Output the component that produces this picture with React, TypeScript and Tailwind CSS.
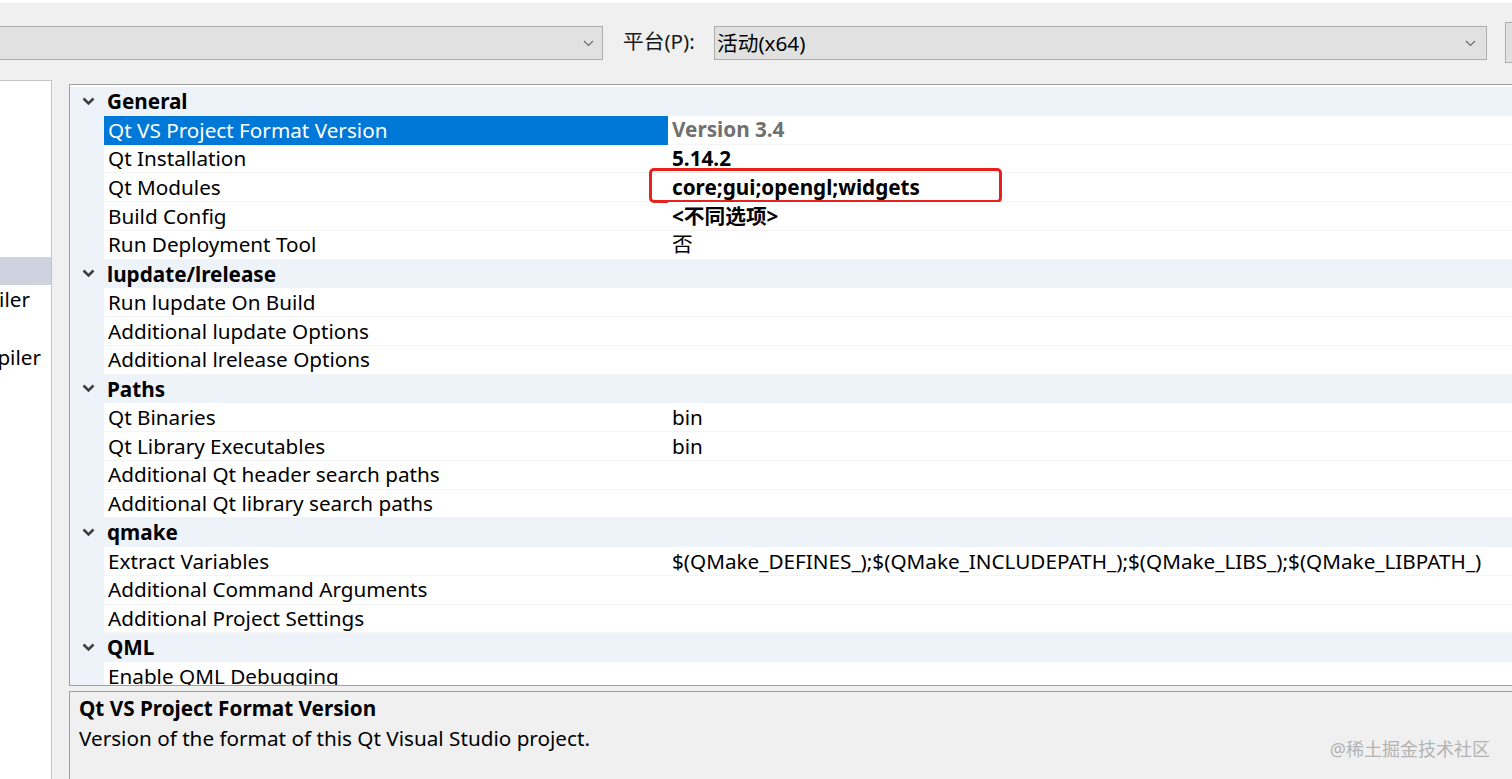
import React from "react";

type Row =
  | { kind: "cat"; label: string }
  | { kind: "prop"; label: string; value?: string; bold?: boolean; selected?: boolean; mark?: boolean };

const rows: Row[] = [
  { kind: "cat", label: "General" },
  { kind: "prop", label: "Qt VS Project Format Version", value: "Version 3.4", bold: true, selected: true },
  { kind: "prop", label: "Qt Installation", value: "5.14.2", bold: true },
  { kind: "prop", label: "Qt Modules", value: "core;gui;opengl;widgets", bold: true, mark: true },
  { kind: "prop", label: "Build Config", value: "<不同选项>", bold: true },
  { kind: "prop", label: "Run Deployment Tool", value: "否" },
  { kind: "cat", label: "lupdate/lrelease" },
  { kind: "prop", label: "Run lupdate On Build" },
  { kind: "prop", label: "Additional lupdate Options" },
  { kind: "prop", label: "Additional lrelease Options" },
  { kind: "cat", label: "Paths" },
  { kind: "prop", label: "Qt Binaries", value: "bin" },
  { kind: "prop", label: "Qt Library Executables", value: "bin" },
  { kind: "prop", label: "Additional Qt header search paths" },
  { kind: "prop", label: "Additional Qt library search paths" },
  { kind: "cat", label: "qmake" },
  {
    kind: "prop",
    label: "Extract Variables",
    value: "$(QMake_DEFINES_);$(QMake_INCLUDEPATH_);$(QMake_LIBS_);$(QMake_LIBPATH_)",
  },
  { kind: "prop", label: "Additional Command Arguments" },
  { kind: "prop", label: "Additional Project Settings" },
  { kind: "cat", label: "QML" },
  { kind: "prop", label: "Enable QML Debugging" },
];

function ComboChevron() {
  return (
    <svg width="11" height="7" viewBox="0 0 11 7" className="shrink-0">
      <path d="M1 1 L5.5 5.5 L10 1" fill="none" stroke="#6b6b6b" strokeWidth="1.2" />
    </svg>
  );
}

function CatChevron() {
  return (
    <svg width="13" height="9" viewBox="0 0 13 9">
      <path d="M1.5 1.5 L6.5 6.5 L11.5 1.5" fill="none" stroke="#404040" strokeWidth="2.6" />
    </svg>
  );
}

function GridRow({ row }: { row: Row }) {
  if (row.kind === "cat") {
    return (
      <div className="flex h-[28.75px] shrink-0 items-center bg-[#eef2f9]">
        <div className="flex w-[34px] shrink-0 items-center justify-center pl-[2px]">
          <CatChevron />
        </div>
        <span className="pl-[3px] font-bold text-black">{row.label}</span>
      </div>
    );
  }
  return (
    <div className="flex h-[28.75px] shrink-0">
      <div className="w-[34px] shrink-0 bg-[#eef2f9]" />
      <div
        className={
          row.selected
            ? "flex w-[564px] shrink-0 items-center bg-[#0078d7] pl-[4px] text-white"
            : "flex w-[564px] shrink-0 items-center border-b border-[#f4f4f4] bg-white pl-[4px] text-black"
        }
      >
        {row.label}
      </div>
      <div className="relative flex flex-1 items-center whitespace-nowrap border-b border-[#f4f4f4] bg-white pl-[4px]">
        <span
          className={
            row.selected
              ? "font-bold text-[#707070]"
              : row.bold
              ? "font-bold text-black"
              : "text-black"
          }
        >
          {row.value}
        </span>
        {row.mark && (
          <div className="absolute left-[-19px] top-[-5px] h-[35px] w-[353px] rounded-[5px] border-[3px] border-[#e8221b]" />
        )}
      </div>
    </div>
  );
}

export default function App() {
  return (
    <div
      className="relative h-[779px] w-[1512px] overflow-hidden bg-[#f0f0f0] text-[20.7px] leading-none"
      style={{ fontFamily: '"Noto Sans", "Noto Sans CJK SC", sans-serif' }}
    >
      <div className="h-[3px] bg-white" />

      {/* configuration / platform bar */}
      <div className="flex h-[79px] items-start pt-[23px]">
        <div className="flex h-[34px] w-[603px] shrink-0 items-center justify-end border border-l-0 border-[#adadad] bg-[#e1e1e1] pr-[8px]">
          <ComboChevron />
        </div>
        <span className="ml-[20px] mt-[5px] w-[91px] shrink-0 text-[#1a1a1a]">平台(P):</span>
        <div className="flex h-[34px] w-[773px] shrink-0 items-center justify-between border border-[#adadad] bg-[#e1e1e1] pl-[2px] pr-[10px]">
          <span className="text-black">活动(x64)</span>
          <ComboChevron />
        </div>
        <div className="ml-[18px] mt-[-4px] h-[41px] w-[20px] shrink-0 border border-r-0 border-[#adadad] bg-[#e1e1e1]" />
      </div>

      <div className="flex h-[697px]">
        {/* category tree, scrolled */}
        <div className="mt-[-2px] flex h-[699px] w-[52px] shrink-0 flex-col overflow-hidden border-r border-t border-[#c4c4c4] bg-white">
          <div className="h-[176px] shrink-0" />
          <div className="h-[28px] shrink-0 bg-[#cdd2de]" />
          <div className="flex h-[29px] shrink-0 items-center justify-end whitespace-nowrap pr-[21px]">
            Qt Meta-Object Compiler
          </div>
          <div className="h-[29px] shrink-0" />
          <div className="flex h-[28px] shrink-0 items-center justify-end whitespace-nowrap pr-[10px]">
            Qt Resource Compiler
          </div>
        </div>

        <div className="ml-[17px] flex flex-1 flex-col">
          {/* property grid */}
          <div className="mt-[2px] flex h-[602px] shrink-0 flex-col overflow-hidden border border-r-0 border-[#a0a0a0] bg-white pt-[2px]">
            {rows.map((r, i) => (
              <GridRow key={i} row={r} />
            ))}
          </div>

          {/* description */}
          <div className="relative mt-[5px] flex-1 border-l border-t border-[#a0a0a0] bg-[#f0f0f0] pl-[9px] pt-[6px]">
            <div className="font-bold text-black">Qt VS Project Format Version</div>
            <div className="mt-[9px] text-black">Version of the format of this Qt Visual Studio project.</div>
            <div className="absolute right-[22px] top-[48px] text-[18px] text-[#b3b3b3]">@稀土掘金技术社区</div>
          </div>
        </div>
      </div>
    </div>
  );
}
